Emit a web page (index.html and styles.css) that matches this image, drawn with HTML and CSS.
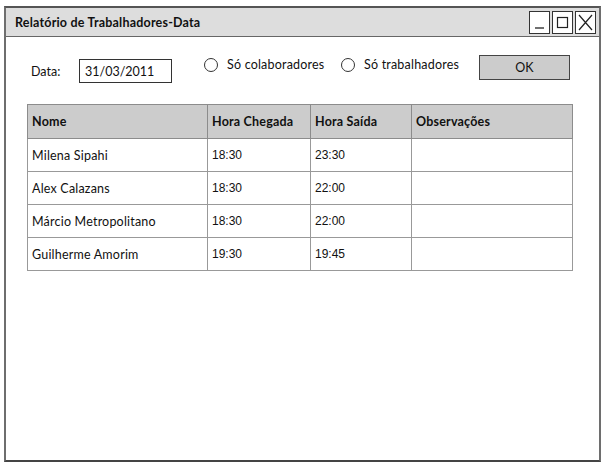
FILE: index.html
```html
<!DOCTYPE html>
<html lang="pt">
<head>
<meta charset="utf-8">
<link rel="stylesheet" href="styles.css">
<title>Relatório de Trabalhadores-Data</title>
</head>
<body>
<div class="window">
  <div class="titlebar">
    <span class="title">Relatório de Trabalhadores-Data</span>
    <div class="controls">
      <span class="ctl"><svg width="19" height="21" viewBox="0 0 19 21"><line x1="5" y1="16" x2="14" y2="16" stroke="#222" stroke-width="1.3"/></svg></span>
      <span class="ctl"><svg width="19" height="21" viewBox="0 0 19 21"><rect x="4.5" y="5.5" width="10" height="10" fill="none" stroke="#222" stroke-width="1.2"/></svg></span>
      <span class="ctl"><svg width="19" height="21" viewBox="0 0 19 21"><path d="M3 3 L16 18 M16 3 L3 18" stroke="#222" stroke-width="1.2" fill="none"/></svg></span>
    </div>
  </div>
  <div class="content">
    <div class="toolbar">
      <label class="lbl">Data:</label>
      <div class="input">31/03/2011</div>
      <div class="radio"><span class="circle"></span>Só colaboradores</div>
      <div class="radio r2"><span class="circle"></span>Só trabalhadores</div>
      <div class="btn">OK</div>
    </div>
    <table class="grid">
      <colgroup>
        <col class="c1"><col class="c2"><col class="c3"><col class="c4">
      </colgroup>
      <thead>
        <tr><th>Nome</th><th>Hora Chegada</th><th>Hora Saída</th><th>Observações</th></tr>
      </thead>
      <tbody>
        <tr><td>Milena Sipahi</td><td class="num">18:30</td><td class="num">23:30</td><td></td></tr>
        <tr><td>Alex Calazans</td><td class="num">18:30</td><td class="num">22:00</td><td></td></tr>
        <tr><td>Márcio Metropolitano</td><td class="num">18:30</td><td class="num">22:00</td><td></td></tr>
        <tr><td>Guilherme Amorim</td><td class="num">19:30</td><td class="num">19:45</td><td></td></tr>
      </tbody>
    </table>
  </div>
</div>
</body>
</html>
```

FILE: styles.css
```css
html, body {
  margin: 0;
  padding: 0;
  background: #fff;
}
body {
  font-family: Lato, "DejaVu Sans", sans-serif;
  font-size: 12.5px;
  color: #111;
}
.window {
  margin: 6px 0 0 4px;
  width: 597px;
  height: 456px;
  box-sizing: border-box;
  border: 2px solid #6e6e6e;
  border-top-color: #555;
  border-bottom-color: #444;
  display: flex;
  flex-direction: column;
}
.titlebar {
  height: 28px;
  background: #dddddd;
  border-bottom: 1px solid #666;
  display: flex;
  align-items: center;
  justify-content: space-between;
  padding: 0 3px 0 9px;
}
.title {
  font-weight: bold;
  font-size: 12.5px;
  letter-spacing: 0.2px;
}
.controls {
  display: flex;
  gap: 2px;
}
.ctl {
  width: 19px;
  height: 21px;
  border: 1px solid #333;
  background: #fff;
  display: block;
}
.ctl svg { display: block; }
.content {
  padding: 19px 0 0 21px;
}
.toolbar {
  display: flex;
  align-items: center;
  height: 27px;
}
.lbl {
  margin: 0 0 0 4px;
  width: 48px;
  padding-top: 4px;
}
.input {
  height: 24px;
  border: 1px solid #333;
  box-sizing: border-box;
  width: 93px;
  padding: 4px 0 0 5px;
  margin-top: 2px;
}
.radio {
  display: flex;
  align-items: center;
  margin-left: 32px;
  margin-top: -10px;
  width: 137px;
  letter-spacing: 0.2px;
}
.radio.r2 { margin-left: 0; width: 138px; }
.circle {
  width: 14px;
  height: 14px;
  border: 1.2px solid #333;
  border-radius: 50%;
  margin-right: 9px;
  box-sizing: border-box;
  background: #fff;
}
.btn {
  width: 91px;
  height: 25px;
  box-sizing: border-box;
  border: 1px solid #444;
  background: #cccccc;
  display: flex;
  align-items: center;
  justify-content: center;
  margin-top: -5px;
}
.grid {
  margin-top: 21px;
  border-collapse: collapse;
  width: 545px;
  table-layout: fixed;
}
.c1 { width: 180px; }
.c2 { width: 103px; }
.c3 { width: 101px; }
.c4 { width: 161px; }
.grid th, .grid td {
  border: 1px solid #8c8c8c;
  text-align: left;
  padding: 0 0 0 4px;
  height: 33px;
  box-sizing: border-box;
  white-space: nowrap;
  letter-spacing: 0.2px;
}
.grid th {
  background: #cccccc;
  font-weight: bold;
  height: 34px;
}
.grid td { border-color: #999; }
.grid td.num { font-family: "Liberation Sans", sans-serif; font-size: 12px; letter-spacing: 0; }
```
